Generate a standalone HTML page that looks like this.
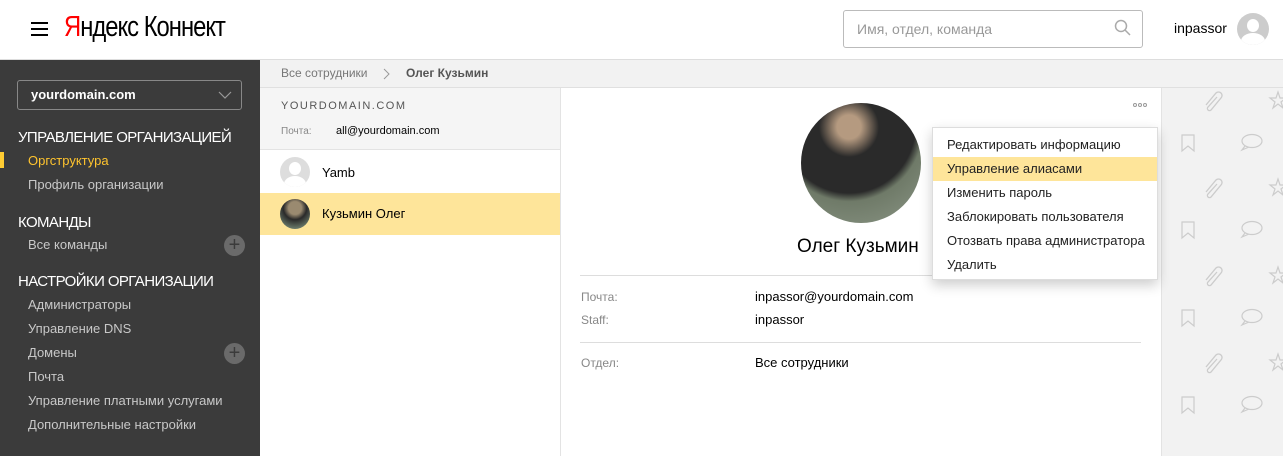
<!DOCTYPE html>
<html><head><meta charset="utf-8"><style>
*{box-sizing:border-box;margin:0;padding:0}
body{width:1283px;height:456px;overflow:hidden;font-family:"Liberation Sans",Arial,sans-serif;background:#fff;position:relative}
.a{position:absolute;white-space:nowrap}
.hdr{left:0;top:0;width:1283px;height:60px;background:#fff;border-bottom:1px solid #ddd}
.side{left:0;top:60px;width:260px;height:396px;background:#3b3b3b;color:#fff}
.side .h{position:absolute;left:18px;font-size:15px;letter-spacing:-0.6px;color:#fff;white-space:nowrap}
.side .i{position:absolute;left:28px;font-size:13px;color:#c8c8c8;white-space:nowrap}
.plus{position:absolute;left:224px;width:21px;height:21px;border-radius:50%;background:#6a6a6a;color:#3b3b3b;font-size:20px;line-height:20px;text-align:center}
.menu div{height:24px;line-height:24px;padding-left:14px;font-size:13px;color:#222;white-space:nowrap}
</style></head><body>
<div class="a hdr">
 <div class="a" style="left:31px;top:22px;width:17px;height:2px;background:#000"></div>
 <div class="a" style="left:31px;top:28px;width:17px;height:2px;background:#000"></div>
 <div class="a" style="left:31px;top:34px;width:17px;height:2px;background:#000"></div>
 <div class="a" style="left:64px;top:11px;font-size:29px;letter-spacing:-1.2px;transform:scaleX(0.82);transform-origin:left;white-space:nowrap"><span style="color:#f00">Я</span>ндекс <span style="font-weight:300">Коннект</span></div>
 <div class="a" style="left:843px;top:10px;width:300px;height:38px;border:1px solid #bbb;border-radius:3px"></div>
 <div class="a" style="left:857px;top:21px;font-size:14px;color:#999">Имя, отдел, команда</div>
 <svg class="a" style="left:1114px;top:19px" width="18" height="18"><circle cx="7" cy="7" r="5.5" fill="none" stroke="#aaa" stroke-width="1.5"/><line x1="11" y1="11" x2="16" y2="16" stroke="#aaa" stroke-width="1.5"/></svg>
 <div class="a" style="left:1174px;top:20px;font-size:14px;color:#000">inpassor</div>
 <div class="a" style="left:1237px;top:13px;width:32px;height:32px;border-radius:50%;background:#ccc;overflow:hidden"><div class="a" style="left:10px;top:6px;width:12px;height:13px;border-radius:50%;background:#fff"></div><div class="a" style="left:4px;top:20px;width:24px;height:16px;border-radius:50%;background:#fff"></div></div>
</div>
<div class="a side">
 <div class="a" style="left:17px;top:20px;width:225px;height:30px;border:1px solid #888;border-radius:3px"></div>
 <div class="a" style="left:31px;top:27px;font-size:13px;font-weight:bold;color:#fff">yourdomain.com</div>
 <svg class="a" style="left:218px;top:30px" width="14" height="10"><path d="M1 2l6 6 6-6" fill="none" stroke="#999" stroke-width="1.2"/></svg>
 <div class="h" style="top:69px">УПРАВЛЕНИЕ ОРГАНИЗАЦИЕЙ</div>
 <div class="a" style="left:0;top:92px;width:4px;height:16px;background:#fc3"></div>
 <div class="i" style="top:93px;color:#ffc42e">Оргструктура</div>
 <div class="i" style="top:117px">Профиль организации</div>
 <div class="h" style="top:154px">КОМАНДЫ</div>
 <div class="i" style="top:177px">Все команды</div><div class="plus" style="top:175px">+</div>
 <div class="h" style="top:213px">НАСТРОЙКИ ОРГАНИЗАЦИИ</div>
 <div class="i" style="top:237px">Администраторы</div>
 <div class="i" style="top:261px">Управление DNS</div>
 <div class="i" style="top:285px">Домены</div><div class="plus" style="top:283px">+</div>
 <div class="i" style="top:309px">Почта</div>
 <div class="i" style="top:333px">Управление платными услугами</div>
 <div class="i" style="top:357px">Дополнительные настройки</div>
</div>
<div class="a" style="left:260px;top:60px;width:1023px;height:28px;background:#f2f2f2;border-bottom:1px solid #e0e0e0"></div>
<div class="a" style="left:281px;top:66px;font-size:12px;color:#777">Все сотрудники</div>
<svg class="a" style="left:383px;top:68px" width="8" height="12"><path d="M1 1l5 5-5 5" fill="none" stroke="#999"/></svg>
<div class="a" style="left:406px;top:66px;font-size:12px;color:#555;font-weight:bold">Олег Кузьмин</div>
<div class="a" style="left:260px;top:88px;width:300px;height:62px;background:#f5f5f5;border-bottom:1px solid #e3e3e3"></div>
<div class="a" style="left:281px;top:100px;font-size:11px;letter-spacing:1.5px;color:#555">YOURDOMAIN.COM</div>
<div class="a" style="left:281px;top:126px;font-size:10px;color:#888">Почта:</div>
<div class="a" style="left:336px;top:125px;font-size:11px;color:#000">all@yourdomain.com</div>
<div class="a" style="left:560px;top:88px;width:1px;height:368px;background:#e3e3e3"></div>
<div class="a" style="left:280px;top:157px;width:30px;height:30px;border-radius:50%;background:#ddd;overflow:hidden"><div class="a" style="left:9px;top:5px;width:12px;height:13px;border-radius:50%;background:#fff"></div><div class="a" style="left:4px;top:19px;width:22px;height:16px;border-radius:50%;background:#fff"></div></div>
<div class="a" style="left:322px;top:165px;font-size:13px;color:#000">Yamb</div>
<div class="a" style="left:260px;top:193px;width:300px;height:42px;background:#fee59a"></div>
<div class="a" style="left:280px;top:199px;width:30px;height:30px;border-radius:50%;background:radial-gradient(circle at 50% 30%,#9a8a70 0 25%,#2a2a2a 45%,#6a7a6a 80%)"></div>
<div class="a" style="left:322px;top:206px;font-size:13px;color:#000">Кузьмин Олег</div>
<div class="a" style="left:801px;top:103px;width:120px;height:120px;border-radius:50%;background:radial-gradient(circle at 40% 20%,#b59a80 0 10%,#2a2a2a 25% 55%,#6f7a68 62%,#8a9585 100%)"></div>
<svg class="a" style="left:1133px;top:103px" width="14" height="4"><circle cx="2" cy="2" r="1.5" fill="none" stroke="#999"/><circle cx="7" cy="2" r="1.5" fill="none" stroke="#999"/><circle cx="12" cy="2" r="1.5" fill="none" stroke="#999"/></svg>
<div class="a" style="left:797px;top:236px;font-size:19px;color:#000">Олег Кузьмин</div>
<div class="a" style="left:580px;top:275px;width:561px;height:1px;background:#ddd"></div>
<div class="a" style="left:581px;top:290px;font-size:12px;color:#888">Почта:</div>
<div class="a" style="left:755px;top:289px;font-size:13px;color:#000">inpassor@yourdomain.com</div>
<div class="a" style="left:581px;top:313px;font-size:12px;color:#888">Staff:</div>
<div class="a" style="left:755px;top:312px;font-size:13px;color:#000">inpassor</div>
<div class="a" style="left:580px;top:342px;width:561px;height:1px;background:#ddd"></div>
<div class="a" style="left:581px;top:356px;font-size:12px;color:#888">Отдел:</div>
<div class="a" style="left:755px;top:355px;font-size:13px;color:#000">Все сотрудники</div>
<div class="a" style="left:1161px;top:88px;width:122px;height:368px;background:#f2f2f2;border-left:1px solid #e3e3e3;overflow:hidden">
<svg width="122" height="368">
<defs>
<g id="clip"><path d="M0 14 L10 2 a3.5 3.5 0 0 1 5 5 L5 19 a2 2 0 0 1 -3 -3 L11 6" fill="none" stroke="#ccc" stroke-width="1.3"/></g>
<g id="star"><path d="M8 0 L10 6 L16 6 L11 10 L13 16 L8 12 L3 16 L5 10 L0 6 L6 6 Z" fill="none" stroke="#ccc" stroke-width="1.2"/></g>
<g id="bm"><path d="M0 0 H12 V16 L6 11 L0 16 Z" fill="none" stroke="#ccc" stroke-width="1.2"/></g>
<g id="cm"><ellipse cx="11" cy="7" rx="10" ry="6.5" fill="none" stroke="#ccc" stroke-width="1.2"/><path d="M4 12 L1 16 L8 13" fill="none" stroke="#ccc" stroke-width="1.2"/></g>
</defs>
<use href="#clip" x="44" y="3"/><use href="#star" x="108" y="4"/>
<use href="#bm" x="20" y="47"/><use href="#cm" x="79" y="46"/>
<use href="#clip" x="44" y="90"/><use href="#star" x="108" y="91"/>
<use href="#bm" x="20" y="134"/><use href="#cm" x="79" y="133"/>
<use href="#clip" x="44" y="178"/><use href="#star" x="108" y="179"/>
<use href="#bm" x="20" y="222"/><use href="#cm" x="79" y="221"/>
<use href="#clip" x="44" y="265"/><use href="#star" x="108" y="266"/>
<use href="#bm" x="20" y="309"/><use href="#cm" x="79" y="308"/>
</svg></div>
<div class="a menu" style="left:932px;top:127px;width:226px;height:153px;background:#fff;border:1px solid #ddd;box-shadow:0 5px 12px rgba(0,0,0,.2);padding-top:5px">
<div>Редактировать информацию</div>
<div style="background:#fee59a">Управление алиасами</div>
<div>Изменить пароль</div>
<div>Заблокировать пользователя</div>
<div>Отозвать права администратора</div>
<div>Удалить</div>
</div>
</body></html>
